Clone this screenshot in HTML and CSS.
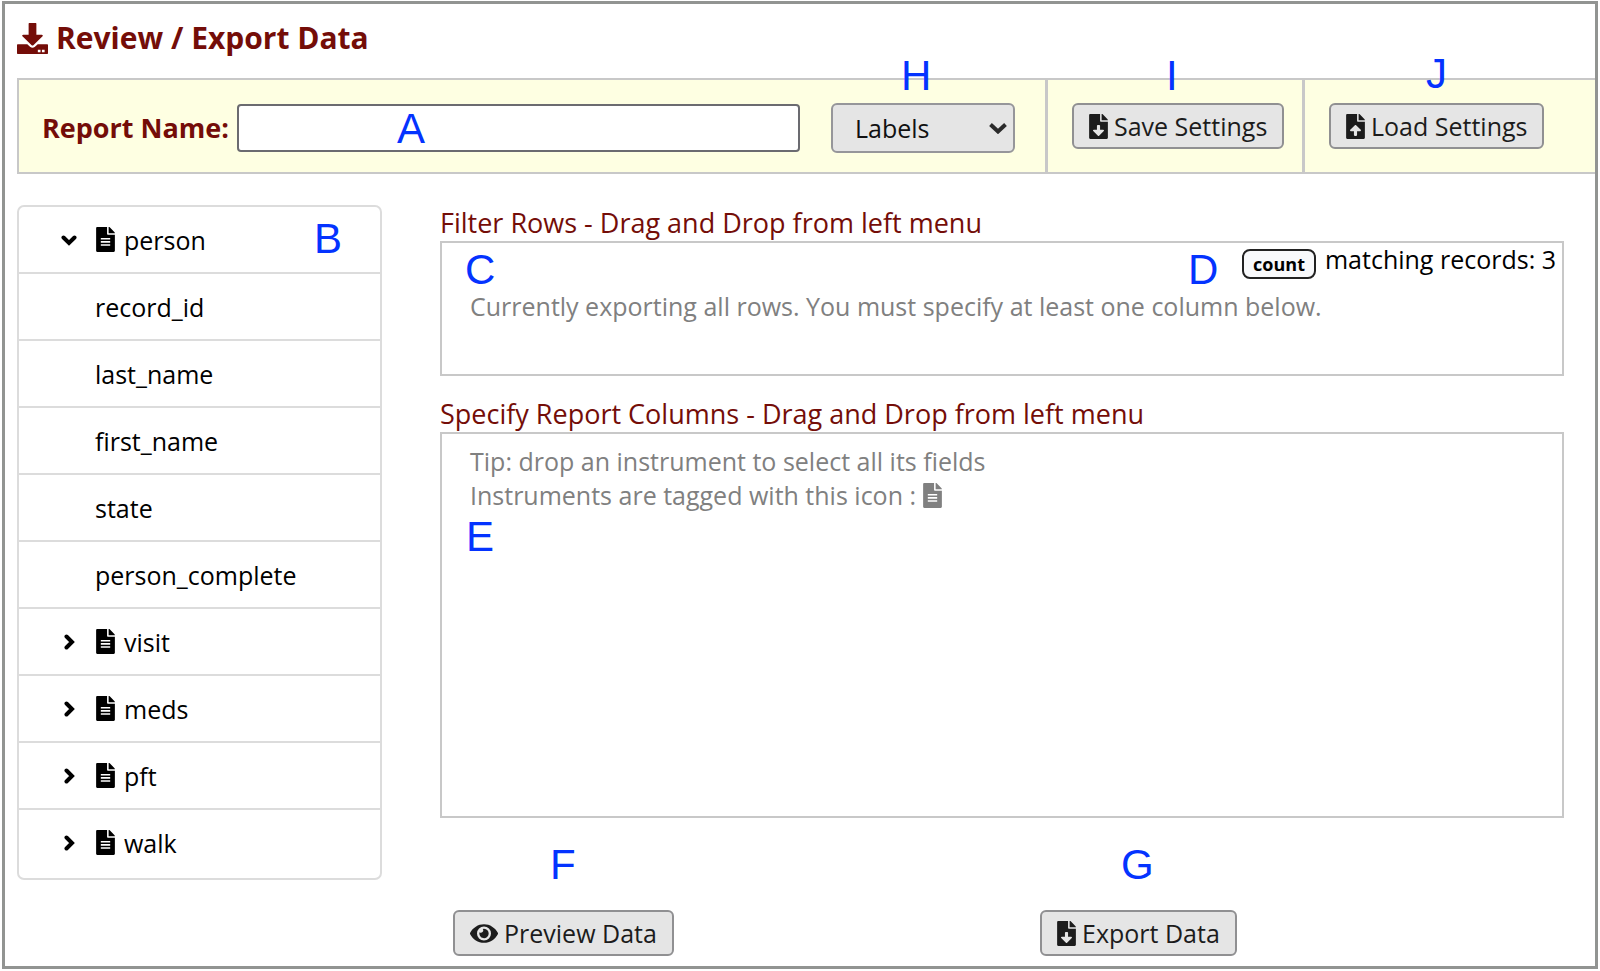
FILE: index.html
```html
<!DOCTYPE html>
<html lang="en">
<head>
<meta charset="utf-8">
<title>Review / Export Data</title>
<link rel="stylesheet" href="styles.css">
</head>
<body>
<svg class="sprite" aria-hidden="true">
  <symbol id="download" viewBox="0 0 512 512"><path d="M200 0h112q8 0 8 8v184h88c16 0 24 18 14 28L270 368c-8 7-20 7-28 0L90 220c-10-10-2-28 14-28h88V8q0-8 8-8zM512 362v138q0 12-12 12H12q-12 0-12-12V364q0-12 12-12h158l50 43c20 18 52 18 72 0l50-43h158q12 0 12 10zM344 440v44h44v-44zm68 0v44h44v-44z" fill-rule="evenodd"/></symbol>
  <symbol id="file" viewBox="0 0 384 512"><path d="M224 136V0H24C10.700 0 0 10.700 0 24v464c0 13.300 10.700 24 24 24h336c13.300 0 24-10.700 24-24V160H248c-13.200 0-24-10.800-24-24zM96 352h192v32H96zm0-64h192v32H96zm0-64h192v32H96zM384 122v6H256V0h6c6 0 12 2 17 7l98 98c4 4 7 11 7 17z" fill-rule="evenodd"/></symbol>
  <symbol id="file-down" viewBox="0 0 384 512"><path d="M224 136V0H24C10.700 0 0 10.700 0 24v464c0 13.300 10.700 24 24 24h336c13.300 0 24-10.700 24-24V160H248c-13.200 0-24-10.800-24-24zM300 347l-96 96c-7 7-17 7-24 0l-96-96c-10-10-3-27 11-27h65v-80c0-9 7-16 16-16h32c9 0 16 7 16 16v80h65c14 0 21 17 11 27zM384 122v6H256V0h6c6 0 12 2 17 7l98 98c4 4 7 11 7 17z" fill-rule="evenodd"/></symbol>
  <symbol id="file-up" viewBox="0 0 384 512"><path d="M224 136V0H24C10.700 0 0 10.700 0 24v464c0 13.300 10.700 24 24 24h336c13.300 0 24-10.700 24-24V160H248c-13.200 0-24-10.800-24-24zM289 352h-65v80c0 9-7 16-16 16h-32c-9 0-16-7-16-16v-80H95c-14 0-21-17-11-27l96-96c7-7 17-7 24 0l96 96c10 10 3 27-11 27zM384 122v6H256V0h6c6 0 12 2 17 7l98 98c4 4 7 11 7 17z" fill-rule="evenodd"/></symbol>
  <symbol id="eye" viewBox="0 0 576 512"><path d="M572.500 241.400C518.300 135.600 410.900 64 288 64S57.700 135.600 3.500 241.400a32.400 32.400 0 0 0 0 29.200C57.700 376.400 165.100 448 288 448s230.300-71.600 284.500-177.400a32.400 32.400 0 0 0 0-29.200zM288 400a144 144 0 1 1 144-144 143.900 143.900 0 0 1-144 144zm0-240a95.300 95.300 0 0 0-25.300 3.800 47.900 47.900 0 0 1-66.900 66.900A95.800 95.800 0 1 0 288 160z"/></symbol>
  <symbol id="chevron" viewBox="0 0 16 16"><path d="M2.500 5.500 8 11l5.500-5.500" fill="none" stroke="currentColor" stroke-width="4" stroke-linecap="round"/></symbol>
</svg>

<main class="page">
  <h1 class="title"><svg class="title-icon"><use href="#download"/></svg>Review / Export Data</h1>

  <form class="toolbar">
    <div class="cell cell-name">
      <label class="name-label" for="report-name">Report Name:</label>
      <input class="name-input" id="report-name" type="text">
      <div class="select-wrap">
        <select class="format" aria-label="Export format"><option>Labels</option></select>
        <svg class="select-arrow" viewBox="0 0 18 12"><path d="M1.500 2.500 9 9.500l7.500-7" fill="none" stroke="currentColor" stroke-width="4"/></svg>
      </div>
    </div>
    <div class="cell cell-save"><button class="btn" type="button"><svg class="file-icon"><use href="#file-down"/></svg>Save Settings</button></div>
    <div class="cell cell-load"><button class="btn" type="button"><svg class="file-icon"><use href="#file-up"/></svg>Load Settings</button></div>
  </form>

  <div class="content">
    <ul class="fields">
      <li class="row"><svg class="chevron"><use href="#chevron"/></svg><svg class="file-icon"><use href="#file"/></svg>person</li>
      <li class="row field">record_id</li>
      <li class="row field">last_name</li>
      <li class="row field">first_name</li>
      <li class="row field">state</li>
      <li class="row field">person_complete</li>
      <li class="row"><svg class="chevron closed"><use href="#chevron"/></svg><svg class="file-icon"><use href="#file"/></svg>visit</li>
      <li class="row"><svg class="chevron closed"><use href="#chevron"/></svg><svg class="file-icon"><use href="#file"/></svg>meds</li>
      <li class="row"><svg class="chevron closed"><use href="#chevron"/></svg><svg class="file-icon"><use href="#file"/></svg>pft</li>
      <li class="row"><svg class="chevron closed"><use href="#chevron"/></svg><svg class="file-icon"><use href="#file"/></svg>walk</li>
    </ul>

    <div class="builder">
      <h2 class="heading">Filter Rows - Drag and Drop from left menu</h2>
      <section class="drop drop-rows">
        <div class="matches"><button class="count" type="button">count</button><span>matching records: 3</span></div>
        <p class="hint">Currently exporting all rows. You must specify at least one column below.</p>
      </section>
      <h2 class="heading">Specify Report Columns - Drag and Drop from left menu</h2>
      <section class="drop drop-columns">
        <p class="hint">Tip: drop an instrument to select all its fields</p>
        <p class="hint">Instruments are tagged with this icon : <svg class="file-icon inline"><use href="#file"/></svg></p>
      </section>
      <div class="actions">
        <button class="btn" type="button"><svg class="eye-icon"><use href="#eye"/></svg>Preview Data</button>
        <button class="btn" type="button"><svg class="file-icon"><use href="#file-down"/></svg>Export Data</button>
      </div>
    </div>
  </div>

  <span class="mark mark-a">A</span>
  <span class="mark mark-b">B</span>
  <span class="mark mark-c">C</span>
  <span class="mark mark-d">D</span>
  <span class="mark mark-e">E</span>
  <span class="mark mark-f">F</span>
  <span class="mark mark-g">G</span>
  <span class="mark mark-h">H</span>
  <span class="mark mark-i">I</span>
  <span class="mark mark-j">J</span>
</main>
</body>
</html>
```

FILE: styles.css
```css
* { box-sizing: border-box; }
body {
  margin: 0;
  padding: 1px 2px 2px;
  background: #fff;
  color: #000;
  font: 25px/34px "Open Sans", "Noto Sans", sans-serif;
}
h1, h2, p, ul { margin: 0; padding: 0; }
svg { flex: none; fill: currentColor; }
.sprite { position: absolute; width: 0; height: 0; }

.page {
  position: relative;
  padding: 14px 0 10px 12px;
  border: 3px solid #929492;
}
.title {
  display: flex;
  align-items: center;
  gap: 8px;
  color: #740d08;
  font-size: 30px;
  font-weight: 700;
  line-height: 40px;
}
.title-icon { width: 31px; height: 31px; }

.toolbar {
  display: grid;
  grid-template-columns: 1fr 257px 293px;
  margin-top: 20px;
}
.cell {
  display: flex;
  align-items: center;
  height: 96px;
  border: 2px solid #c8c8c8;
  border-right-width: 0;
  background: #feffe2;
}
.cell + .cell { border-left-width: 3px; padding-left: 24px; }
.cell-name { padding: 4px 30px 0 23px; }
.name-label { color: #740d08; font-size: 27px; font-weight: 700; white-space: nowrap; }
.name-input {
  flex: 1;
  min-width: 0;
  height: 48px;
  margin: 0 31px 0 8px;
  padding: 0 12px;
  border: 2px solid #6b6b70;
  border-radius: 4px;
  background: #fff;
  font: inherit;
}
.select-wrap { position: relative; width: 184px; }
.format {
  display: block;
  width: 100%;
  height: 50px;
  padding: 0 24px 0 22px;
  border: 2px solid #96969a;
  border-radius: 6px;
  background: #e5e5e5;
  color: #111;
  font: inherit;
  appearance: none;
}
.select-arrow { position: absolute; right: 8px; top: 19px; width: 18px; height: 12px; color: #2b2b2b; }
.btn {
  display: inline-flex;
  align-items: center;
  gap: 6px;
  height: 46px;
  padding: 0 15px;
  border: 2px solid #909092;
  border-radius: 6px;
  background: #e5e5e5;
  color: #1c1c1c;
  font: inherit;
  white-space: nowrap;
}
.file-icon { width: 19px; height: 25px; }
.eye-icon { width: 28px; height: 25px; }

.content {
  display: flex;
  align-items: flex-start;
  gap: 58px;
  padding-right: 31px;
}
.fields {
  flex: none;
  width: 365px;
  margin-top: 31px;
  padding-bottom: 3px;
  border: 2px solid #dcdcdc;
  border-radius: 7px;
  list-style: none;
}
.row {
  display: flex;
  align-items: center;
  height: 67px;
  padding-left: 42px;
  border-bottom: 2px solid #dcdcdc;
}
.row:last-child { height: 65px; border-bottom: 0; }
.row .file-icon { margin: 0 9px 0 19px; }
.field { padding-left: 76px; }
.chevron { width: 16px; height: 16px; }
.closed { transform: rotate(-90deg); }

.builder { flex: 1; min-width: 0; padding-top: 31px; }
.heading { color: #740d08; font-size: 27px; font-weight: 400; line-height: 36px; }
.drop { border: 2px solid #c8c8c8; }
.drop-rows { height: 135px; margin-bottom: 20px; }
.drop-columns { height: 386px; padding-top: 10px; }
.hint { padding-left: 28px; color: #808080; }
.inline { vertical-align: -3px; }
.matches {
  display: flex;
  justify-content: flex-end;
  gap: 9px;
  height: 46px;
  padding-right: 6px;
}
.matches span { line-height: 32px; }
.count {
  height: 30px;
  margin-top: 6px;
  padding: 0 9px;
  border: 2px solid #222;
  border-radius: 8px;
  background: #f8f9fb;
  color: #000;
  font: 700 18px/24px "Open Sans", "Noto Sans", sans-serif;
}
.actions {
  display: grid;
  grid-template-columns: 587px auto;
  justify-items: start;
  justify-content: start;
  padding: 92px 0 0 13px;
}

.mark {
  position: absolute;
  color: #0433ff;
  font: 42px/48px "Liberation Sans", Arial, sans-serif;
}
.mark-a { left: 392px; top: 101px; }
.mark-b { left: 309px; top: 211px; }
.mark-c { left: 460px; top: 242px; }
.mark-d { left: 1183px; top: 242px; }
.mark-e { left: 461px; top: 509px; }
.mark-f { left: 545px; top: 837px; }
.mark-g { left: 1116px; top: 837px; }
.mark-h { left: 896px; top: 48px; }
.mark-i { left: 1161px; top: 48px; }
.mark-j { left: 1421px; top: 46px; }
```
